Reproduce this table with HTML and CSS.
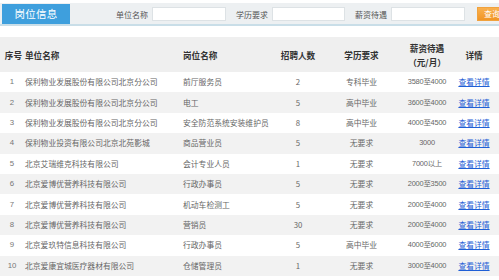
FILE: index.html
```html
<!DOCTYPE html>
<html lang="zh-CN">
<head>
<meta charset="utf-8">
<title>岗位信息</title>
<link rel="stylesheet" href="styles.css">
</head>
<body>
<div class="topbar">
  <div class="tab">岗位信息</div>
  <form class="search">
    <label class="field"><span>单位名称</span><input type="text"></label>
    <label class="field"><span>学历要求</span><input type="text"></label>
    <label class="field"><span>薪资待遇</span><input type="text"></label>
    <button type="button" class="btn">查询</button>
  </form>
</div>
<table class="jobs">
  <colgroup>
    <col class="c-no"><col class="c-co"><col class="c-job"><col class="c-num"><col class="c-edu"><col class="c-pay"><col class="c-det">
  </colgroup>
  <thead>
    <tr>
      <th class="no">序号</th>
      <th class="left co">单位名称</th>
      <th class="left">岗位名称</th>
      <th>招聘人数</th>
      <th>学历要求</th>
      <th>薪资待遇<br>（元/月）</th>
      <th>详情</th>
    </tr>
  </thead>
  <tbody>
    <tr><td class="no">1</td><td class="left co">保利物业发展股份有限公司北京分公司</td><td class="left">前厅服务员</td><td>2</td><td class="edu">专科毕业</td><td class="pay">3580至4000</td><td><a href="#">查看详情</a></td></tr>
    <tr><td class="no">2</td><td class="left co">保利物业发展股份有限公司北京分公司</td><td class="left">电工</td><td>5</td><td class="edu">高中毕业</td><td class="pay">3600至4000</td><td><a href="#">查看详情</a></td></tr>
    <tr><td class="no">3</td><td class="left co">保利物业发展股份有限公司北京分公司</td><td class="left">安全防范系统安装维护员</td><td>8</td><td class="edu">高中毕业</td><td class="pay">4000至4500</td><td><a href="#">查看详情</a></td></tr>
    <tr><td class="no">4</td><td class="left co">保利物业投资有限公司北京北苑影城</td><td class="left">商品营业员</td><td>5</td><td class="edu">无要求</td><td class="pay">3000</td><td><a href="#">查看详情</a></td></tr>
    <tr><td class="no">5</td><td class="left co">北京艾瑞维克科技有限公司</td><td class="left">会计专业人员</td><td>1</td><td class="edu">无要求</td><td class="pay">7000以上</td><td><a href="#">查看详情</a></td></tr>
    <tr><td class="no">6</td><td class="left co">北京爱博优营养科技有限公司</td><td class="left">行政办事员</td><td>5</td><td class="edu">无要求</td><td class="pay">2000至3500</td><td><a href="#">查看详情</a></td></tr>
    <tr><td class="no">7</td><td class="left co">北京爱博优营养科技有限公司</td><td class="left">机动车检测工</td><td>5</td><td class="edu">无要求</td><td class="pay">2000至4000</td><td><a href="#">查看详情</a></td></tr>
    <tr><td class="no">8</td><td class="left co">北京爱博优营养科技有限公司</td><td class="left">营销员</td><td>30</td><td class="edu">无要求</td><td class="pay">2000至4000</td><td><a href="#">查看详情</a></td></tr>
    <tr><td class="no">9</td><td class="left co">北京爱玖特信息科技有限公司</td><td class="left">行政办事员</td><td>5</td><td class="edu">高中毕业</td><td class="pay">4000至6000</td><td><a href="#">查看详情</a></td></tr>
    <tr><td class="no">10</td><td class="left co">北京爱康宜城医疗器材有限公司</td><td class="left">仓储管理员</td><td>1</td><td class="edu">无要求</td><td class="pay">3000至4000</td><td><a href="#">查看详情</a></td></tr>
  </tbody>
</table>
</body>
</html>
```

FILE: styles.css
```css
html, body {
  margin: 0;
  padding: 0;
  background: #fff;
  font-family: "Liberation Sans", "Noto Sans CJK SC", sans-serif;
  color: #666;
  overflow: hidden;
}

.topbar {
  margin-top: 3px;
  height: 20px;
  padding-top: 1px;
  background: #edf0f2;
  border-bottom: 2px solid #c9dee8;
  display: flex;
  align-items: flex-end;
  overflow: hidden;
}

.tab {
  flex-shrink: 0;
  margin-left: 2px;
  width: 68px;
  height: 20px;
  background: #3e9fdd;
  color: #fff;
  font-family: "Noto Sans CJK SC", sans-serif;
  font-size: 10.5px;
  line-height: 20px;
  text-align: center;
  letter-spacing: 0.3px;
}

.search {
  flex-shrink: 0;
  display: flex;
  align-items: center;
  height: 20px;
  margin: 0 0 0 46px;
  gap: 10px;
}

.field {
  flex-shrink: 0;
  display: flex;
  align-items: center;
  gap: 4px;
  font-family: "Noto Sans CJK SC", sans-serif;
  font-size: 8px;
  color: #555;
  white-space: nowrap;
}

.field input {
  flex-shrink: 0;
  width: 72px;
  height: 12px;
  margin: 0;
  padding: 0;
  border: 1px solid #dde2e5;
  background: #fff;
}

.field:nth-child(2) input { width: 71px; }

.btn {
  flex-shrink: 0;
  margin-left: 2px;
  width: 30px;
  height: 14px;
  padding: 0 0 0 6px;
  border: 1px solid #f0a23e;
  background: linear-gradient(#f9b04e, #f19526);
  color: #fff;
  font-family: "Noto Sans CJK SC", sans-serif;
  font-size: 8px;
  line-height: 12px;
  text-align: left;
  white-space: nowrap;
  overflow: hidden;
}

.jobs {
  margin-top: 11px;
  width: 499px;
  border-collapse: collapse;
  table-layout: fixed;
}

.c-no { width: 24px; }
.c-co { width: 156px; }
.c-job { width: 98px; }
.c-num { width: 40px; }
.c-edu { width: 87px; }
.c-pay { width: 44px; }
.c-det { width: 50px; }

.jobs th {
  height: 35px;
  padding: 0;
  background: #efefef;
  color: #333;
  font-family: "Noto Sans CJK SC", sans-serif;
  font-size: 8.6px;
  font-weight: bold;
  line-height: 14px;
  text-align: center;
}

.jobs td {
  height: 20.4px;
  padding: 0;
  font-family: "Noto Sans CJK SC", sans-serif;
  font-size: 7.8px;
  line-height: 10px;
  text-align: center;
  white-space: nowrap;
  overflow: hidden;
}

.jobs tbody tr:nth-child(even) td { background: #f2f2f2; }

.jobs th.no { text-align: right; padding-right: 2px; }
.jobs td.no { color: #777; font-family: "Liberation Sans", sans-serif; }

.jobs .left { text-align: left; padding-left: 3px; }
.jobs .co { padding-left: 1px; }

.jobs td.pay { font-family: "Liberation Sans", "Noto Sans CJK SC", sans-serif; font-size: 7.4px; letter-spacing: -0.2px; }

.jobs a {
  color: #1f5fd6;
  text-decoration: underline;
}
```
